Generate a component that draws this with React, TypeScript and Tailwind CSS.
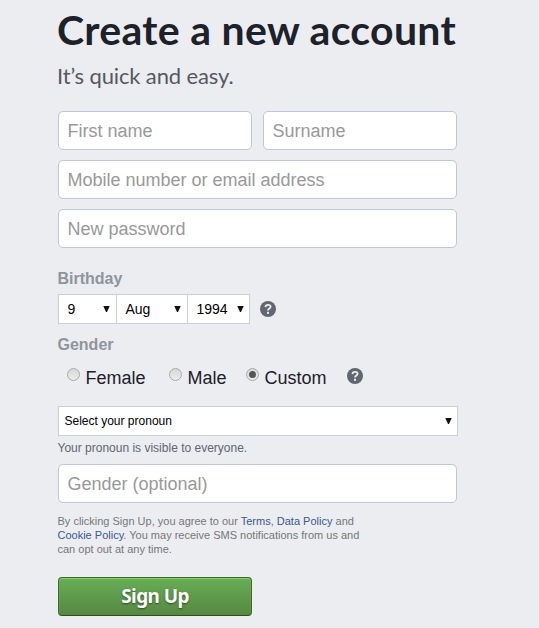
import React from "react";

function Field({ label, className = "" }: { label: string; className?: string }) {
  return (
    <input
      type="text"
      placeholder={label}
      className={`block h-[39px] rounded-[5px] border border-[#bdc7d8] bg-white px-[8.5px] pt-[2px] text-[18px] text-[#1d2129] outline-none placeholder:text-[#999] ${className}`}
    />
  );
}

function Arrow() {
  return (
    <svg width="7" height="6" viewBox="0 0 7 6" className="mb-px shrink-0">
      <path d="M0.3 0H6.7L4 6H3Z" fill="#111" />
    </svg>
  );
}

function Dropdown({ value, className }: { value: string; className: string }) {
  return (
    <button
      type="button"
      className={`flex h-[30px] items-center justify-between border border-[#ccd0d5] bg-white text-black ${className}`}
    >
      <span>{value}</span>
      <Arrow />
    </button>
  );
}

function Help({ className = "" }: { className?: string }) {
  return (
    <svg width="16" height="16" viewBox="0 0 16 16" className={`shrink-0 ${className}`}>
      <circle cx="8" cy="8" r="8" fill="#606770" />
      <path
        d="M5.4 6.1C5.5 4.5 6.5 3.8 8 3.8C9.6 3.8 10.6 4.6 10.6 5.8C10.6 7.5 8 7.5 8 9.5"
        fill="none"
        stroke="#ebedf0"
        strokeWidth="1.8"
      />
      <rect x="7" y="10.8" width="2" height="2" fill="#ebedf0" />
    </svg>
  );
}

function Radio({ label, checked = false, className }: { label: string; checked?: boolean; className: string }) {
  return (
    <label className={`flex h-[22px] text-[18px] leading-[22px] text-[#1d2129] ${className}`}>
      <span className="mr-[5.5px] flex size-[13px] shrink-0 items-center justify-center rounded-full border border-[#a9a9a9] bg-linear-to-b from-[#d8d8d8] to-[#ececec]">
        {checked && <span className="size-[7px] rounded-full bg-[#555]" />}
      </span>
      <span className="-mt-px">{label}</span>
    </label>
  );
}

export default function App() {
  return (
    <main className="h-[628px] w-[539px] overflow-hidden bg-[#ebedf0] pl-[58px] font-['Liberation_Sans',Arial,sans-serif]">
      <h1 className="-ml-px h-[62px] pt-[4px] font-[Lato,sans-serif] text-[41px] leading-[52px] font-bold tracking-[0.3px] whitespace-nowrap text-[#1d2129]">
        Create a new account
      </h1>
      <p className="-ml-px h-[49px] font-[Lato,sans-serif] text-[22px] leading-[28px] font-normal tracking-[-0.13px] whitespace-nowrap text-[#55595f]">
        It’s quick and easy.
      </p>

      <form className="w-[400px]" onSubmit={(event) => event.preventDefault()}>
        <div className="flex w-[399px] flex-col gap-[10px]">
          <div className="flex justify-between">
            <Field label="First name" className="w-[194px]" />
            <Field label="Surname" className="w-[194px]" />
          </div>
          <Field label="Mobile number or email address" className="w-full" />
          <Field label="New password" className="w-full" />
        </div>

        <h2 className="mt-5 -ml-[0.5px] h-[26px] text-[16px] leading-[22px] font-bold text-[#90949c]">Birthday</h2>
        <div className="flex items-center text-[14px]">
          <Dropdown value="9" className="w-[59px] pr-[6px] pl-[8.5px]" />
          <Dropdown value="Aug" className="-ml-px w-[72px] pr-[6px] pl-[8.5px]" />
          <Dropdown value="1994" className="-ml-px w-[63px] pr-[5px] pl-[8.5px]" />
          <Help className="ml-[10px]" />
        </div>

        <h2 className="mt-[10px] -ml-[0.5px] h-[34px] text-[16px] leading-[22px] font-bold text-[#90949c]">Gender</h2>
        <div className="flex h-[38px] items-start pl-[9px]">
          <Radio label="Female" className="w-[102px]" />
          <Radio label="Male" className="w-[77px]" />
          <Radio label="Custom" checked className="w-[101px]" />
          <Help />
        </div>

        <Dropdown value="Select your pronoun" className="w-[400px] pr-[5px] pl-[5.5px] text-[12px]" />
        <p className="-ml-[0.5px] h-[28px] pt-[4px] text-[12px] leading-[16px] text-[#606770]">
          Your pronoun is visible to everyone.
        </p>
        <Field label="Gender (optional)" className="w-[399px]" />

        <p className="mt-[11px] -ml-[0.5px] text-[11px] leading-[14px] whitespace-nowrap text-[#777]">
          By clicking Sign Up, you agree to our <a className="text-[#385898]">Terms</a>,{" "}
          <a className="text-[#385898]">Data Policy</a> and
          <br />
          <a className="text-[#385898]">Cookie Policy</a>. You may receive SMS notifications from us and
          <br />
          can opt out at any time.
        </p>

        <button
          type="submit"
          className="mt-[21px] flex h-[39px] w-[194px] items-center justify-center rounded-[4px] border border-[#3b6e22] border-b-[#2c5115] bg-linear-to-b from-[#67ae55] to-[#578843] pb-px font-['Noto_Sans',sans-serif] text-[19px] font-bold tracking-[-0.6px] text-white shadow-[inset_0_1px_1px_#8fcc76] [text-shadow:0_1px_2px_rgba(0,0,0,0.5)]"
        >
          Sign Up
        </button>
      </form>
    </main>
  );
}
